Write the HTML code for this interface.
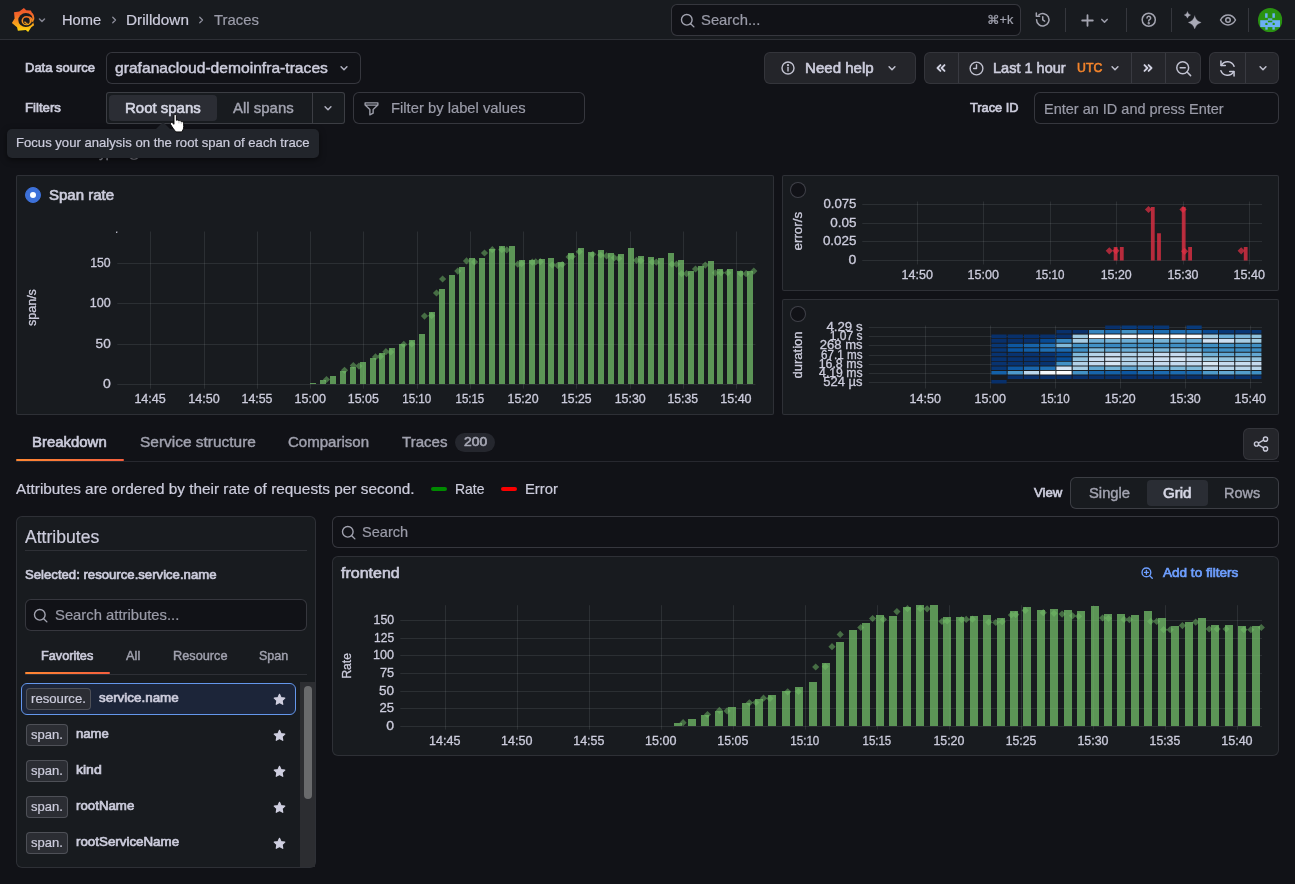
<!DOCTYPE html>
<html lang="en">
<head>
<meta charset="utf-8">
<title>Traces - Drilldown - Grafana</title>
<style>
html,body{margin:0;padding:0}
body{width:1295px;height:884px;overflow:hidden;background:#111217;color:#ccccdc;font-family:"Liberation Sans",sans-serif;position:relative;-webkit-font-smoothing:antialiased}
#app{position:absolute;left:0;top:0;width:1295px;height:884px;overflow:hidden;will-change:transform;transform:translateZ(0)}
.b{position:absolute;box-sizing:content-box;margin:0;padding:0;display:block}
button.b{font:inherit;color:inherit}
.t{position:absolute;white-space:pre;transform-origin:0 50%;margin:0;padding:0;text-decoration:none;color:#ccccdc;font-weight:400}
.i{position:absolute;overflow:visible}
svg text{font-family:"Liberation Sans",sans-serif}
ul,li{list-style:none;margin:0;padding:0}
</style>
</head>
<body>
<div id="app">
<header class="b" style="left:0;top:0;width:1295px;height:39px;background:#181b1f;border-bottom:1px solid rgba(204,204,220,0.12)">
<svg class="i" style="left:0;top:0" width="40" height="40" viewBox="0 0 40 40">
<defs><linearGradient id="lg" gradientUnits="userSpaceOnUse" x1="0" y1="8" x2="0" y2="32"><stop offset="0" stop-color="#f0522a"/><stop offset="0.3" stop-color="#f2682a"/><stop offset="0.65" stop-color="#f9a01c"/><stop offset="1" stop-color="#ffdd0a"/></linearGradient></defs>
<path fill="url(#lg)" d="M23.9 7.9L26.2 10.3L30.9 10.6L31.8 12.6C33 13.6 33.9 15.1 34.2 17C34.5 18.8 34.2 20.4 33 21.8L34.1 25.3L31.3 27.3L28.1 32L25.8 30.1L17.9 30.8L17 27.3L11.9 22.9L14.6 18.5L14 12.3L19.3 11.6Z"/>
<ellipse cx="25.9" cy="20.1" rx="7.6" ry="7" fill="#181b1f"/>
<path fill="url(#lg)" d="M31.6 13.5C33.6 15.3 34.3 17.5 34.1 19.5L32.4 21.5C32.8 19 32.6 16.5 31 14.5Z"/>
<ellipse cx="26.5" cy="20.7" rx="5" ry="4.6" fill="url(#lg)"/>
<path fill="url(#lg)" d="M29 16.2C31.5 16.8 33.2 18.8 33.4 21.3L31.5 22.5C31.8 20 30.5 18 28.5 17.2Z"/>
<circle cx="26.4" cy="20.9" r="3.3" fill="#181b1f"/>
<path d="M24.7 21.5c.3 1.4 1.6 2.1 2.9 1.7" fill="none" stroke="url(#lg)" stroke-width="1.2"/>
</svg>
<svg class="i" style="left:36.2px;top:13.8px;" width="12" height="12" viewBox="0 0 24 24" fill="none" stroke="#82838f" stroke-width="3" stroke-linecap="round" stroke-linejoin="round"><path d="M7 10l5 5 5-5"/></svg>
<nav>
<a class="t" style="left:62.4px;top:9.7px;font-size:14.4px;line-height:20px;transform:scaleX(1.0185);-webkit-text-stroke:0.2px;">Home</a>
<svg class="i" style="left:108px;top:14.2px;" width="12" height="12" viewBox="0 0 24 24" fill="none" stroke="#8e8f9c" stroke-width="2.6" stroke-linecap="round" stroke-linejoin="round"><path d="M9.5 6.5l5.5 5.5-5.5 5.5"/></svg>
<a class="t" style="left:126px;top:9.7px;font-size:14.4px;line-height:20px;transform:scaleX(1.0627);-webkit-text-stroke:0.2px;">Drilldown</a>
<svg class="i" style="left:195px;top:14.2px;" width="12" height="12" viewBox="0 0 24 24" fill="none" stroke="#8e8f9c" stroke-width="2.6" stroke-linecap="round" stroke-linejoin="round"><path d="M9.5 6.5l5.5 5.5-5.5 5.5"/></svg>
<span class="t" style="left:214.2px;top:9.7px;font-size:14.4px;line-height:20px;color:#9b9ca9;transform:scaleX(1.0333);-webkit-text-stroke:0.2px;">Traces</span>
</nav>
<div class="b" style="left:671px;top:4px;width:348px;height:30px;background:#111217;border:1px solid rgba(204,204,220,0.2);border-radius:6px;"></div>
<svg class="i" style="left:678.5px;top:11.5px;" width="17" height="17" viewBox="0 0 24 24" fill="none" stroke="#a2a3b0" stroke-width="1.98" stroke-linecap="round" stroke-linejoin="round"><circle cx="11" cy="11" r="7.5"/><path d="M16.5 16.5L21 21"/></svg>
<span class="t" style="left:700.6px;top:9.7px;font-size:14.4px;line-height:20px;color:#9a9ba8;transform:scaleX(1.0296);-webkit-text-stroke:0.2px;">Search...</span>
<span class="t" style="left:987px;top:9.7px;font-size:12px;line-height:20px;color:#a2a3b0;transform:scaleX(1.0513);-webkit-text-stroke:0.2px;">⌘+k</span>
<svg class="i" style="left:1034.25px;top:11.45px;" width="17.5" height="17.5" viewBox="0 0 24 24" fill="none" stroke="#a3a4b0" stroke-width="2.06" stroke-linecap="round" stroke-linejoin="round"><path d="M3.5 12a8.5 8.5 0 1 0 3-6.5"/><path d="M3.2 2.8v4.4h4.4"/><path d="M12 8v4.3l2.6 1.6"/></svg>
<div class="b" style="left:1064.7px;top:8px;width:1px;height:24px;background:rgba(204,204,220,0.16);"></div>
<svg class="i" style="left:1079.1px;top:11.7px;" width="17" height="17" viewBox="0 0 24 24" fill="none" stroke="#a3a4b0" stroke-width="2.54" stroke-linecap="round" stroke-linejoin="round"><path d="M12 4.5v15M4.5 12h15"/></svg>
<svg class="i" style="left:1098.1px;top:13.5px;" width="13" height="13" viewBox="0 0 24 24" fill="none" stroke="#9a9ba8" stroke-width="2.77" stroke-linecap="round" stroke-linejoin="round"><path d="M7 10l5 5 5-5"/></svg>
<div class="b" style="left:1126px;top:8px;width:1px;height:24px;background:rgba(204,204,220,0.16);"></div>
<svg class="i" style="left:1140.05px;top:11.45px;" width="17.5" height="17.5" viewBox="0 0 24 24" fill="none" stroke="#a3a4b0" stroke-width="2.06" stroke-linecap="round" stroke-linejoin="round"><circle cx="12" cy="12" r="9"/><path d="M9.6 9.6a2.5 2.5 0 1 1 3.6 2.3c-.8.4-1.2.9-1.2 1.8"/><circle cx="12" cy="16.8" r="0.6" fill="#a3a4b0"/></svg>
<div class="b" style="left:1170.8px;top:8px;width:1px;height:24px;background:rgba(204,204,220,0.16);"></div>
<svg class="i" style="left:1182.5px;top:10.9px;" width="19" height="19" viewBox="0 0 24 24" fill="none" stroke="#a9aab6" stroke-width="1.77" stroke-linecap="round" stroke-linejoin="round"><path d="M14.8 6.2Q16.6 12.6 23 14.4Q16.6 16.2 14.8 22.6Q13 16.2 6.6 14.4Q13 12.6 14.8 6.2zM5.6 0.8Q6.52 4.08 9.8 5Q6.52 5.92 5.6 9.2Q4.68 5.92 1.4 5Q4.68 4.08 5.6 0.8z" fill="#a9aab6" stroke="#a9aab6" stroke-width="0.3"/></svg>
<svg class="i" style="left:1219px;top:11.2px;" width="18" height="18" viewBox="0 0 24 24" fill="none" stroke="#a3a4b0" stroke-width="2" stroke-linecap="round" stroke-linejoin="round"><path d="M2 12c2.5-4.4 6-6.5 10-6.5s7.5 2.1 10 6.5c-2.5 4.4-6 6.5-10 6.5s-7.5-2.1-10-6.5z"/><circle cx="12" cy="12" r="3"/></svg>
<div class="b" style="left:1247.6px;top:8px;width:1px;height:24px;background:rgba(204,204,220,0.16);"></div>
<svg class="i" style="left:1257.9px;top:7.8px" width="24.3" height="24.3" viewBox="0 0 24.3 24.3"><defs><clipPath id="av"><circle cx="12.15" cy="12.15" r="12.15"/></clipPath></defs>
<g clip-path="url(#av)"><rect width="24.3" height="24.3" fill="#2a9212"/>
<g fill="#6cb0f5"><rect x="7.1" y="5.3" width="2.5" height="4.5"/><rect x="14.4" y="5.3" width="2.5" height="4.5"/><rect x="9.9" y="10.4" width="4.4" height="1.4"/><rect x="2.2" y="12.2" width="19.8" height="6.9"/><rect x="7.3" y="19.1" width="2.4" height="2.5"/><rect x="14.4" y="19.1" width="2.4" height="2.5"/></g>
<g fill="#2a9212"><rect x="9.9" y="12.8" width="4.4" height="1.5"/><circle cx="8.4" cy="15.9" r="1.2"/><circle cx="15.7" cy="15.9" r="1.2"/></g></g></svg>
</header>
<main>
<label class="t" style="left:25.4px;top:57.6px;font-size:12.4px;line-height:20px;transform:scaleX(1.0492);-webkit-text-stroke:0.65px;">Data source</label>
<div class="b" style="left:106px;top:52px;width:253px;height:30px;background:#111217;border:1px solid rgba(204,204,220,0.2);border-radius:6px;"></div>
<span class="t" style="left:115px;top:57.6px;font-size:14.4px;line-height:20px;transform:scaleX(1.0863);-webkit-text-stroke:0.45px;">grafanacloud-demoinfra-traces</span>
<svg class="i" style="left:336.5px;top:61px;" width="14" height="14" viewBox="0 0 24 24" fill="none" stroke="#b0b1bf" stroke-width="2.57" stroke-linecap="round" stroke-linejoin="round"><path d="M7 10l5 5 5-5"/></svg>
<button class="b" style="left:764px;top:52px;width:150px;height:30px;background:rgba(204,204,220,0.1);border:1px solid rgba(204,204,220,0.1);border-radius:6px;"></button>
<svg class="i" style="left:780px;top:60px;" width="16" height="16" viewBox="0 0 24 24" fill="none" stroke="#c0c1cf" stroke-width="2.1" stroke-linecap="round" stroke-linejoin="round"><circle cx="12" cy="12" r="9"/><path d="M12 11v5.5"/><circle cx="12" cy="7.8" r="0.7" fill="#c0c1cf"/></svg>
<span class="t" style="left:804.6px;top:57.6px;font-size:14.4px;line-height:20px;transform:scaleX(1.0471);-webkit-text-stroke:0.6px;">Need help</span>
<svg class="i" style="left:884.5px;top:61px;" width="14" height="14" viewBox="0 0 24 24" fill="none" stroke="#c0c1cf" stroke-width="2.57" stroke-linecap="round" stroke-linejoin="round"><path d="M7 10l5 5 5-5"/></svg>
<div class="b" style="left:924px;top:52px;width:275px;height:30px;background:rgba(204,204,220,0.1);border:1px solid rgba(204,204,220,0.1);border-radius:6px;"></div>
<div class="b" style="left:958px;top:53px;width:1px;height:30px;background:rgba(204,204,220,0.13);"></div>
<div class="b" style="left:1131px;top:53px;width:1px;height:30px;background:rgba(204,204,220,0.13);"></div>
<div class="b" style="left:1165px;top:53px;width:1px;height:30px;background:rgba(204,204,220,0.13);"></div>
<svg class="i" style="left:934px;top:61px;" width="14" height="14" viewBox="0 0 24 24" fill="none" stroke="#d0d1e0" stroke-width="3.26" stroke-linecap="round" stroke-linejoin="round"><path d="M11 7l-5 5 5 5M18 7l-5 5 5 5"/></svg>
<svg class="i" style="left:967.5px;top:59.5px;" width="17" height="17" viewBox="0 0 24 24" fill="none" stroke="#c0c1cf" stroke-width="1.98" stroke-linecap="round" stroke-linejoin="round"><circle cx="12" cy="12" r="9"/><path d="M12 6.5V12h-4"/></svg>
<span class="t" style="left:993px;top:57.6px;font-size:14.4px;line-height:20px;transform:scaleX(1.0095);-webkit-text-stroke:0.6px;">Last 1 hour</span>
<span class="t" style="left:1077px;top:57.6px;font-size:12.4px;line-height:20px;color:#f5852c;transform:scaleX(0.9934);-webkit-text-stroke:0.6px;">UTC</span>
<svg class="i" style="left:1107.5px;top:61px;" width="14" height="14" viewBox="0 0 24 24" fill="none" stroke="#c0c1cf" stroke-width="2.57" stroke-linecap="round" stroke-linejoin="round"><path d="M7 10l5 5 5-5"/></svg>
<svg class="i" style="left:1141px;top:61px;" width="14" height="14" viewBox="0 0 24 24" fill="none" stroke="#d0d1e0" stroke-width="3.26" stroke-linecap="round" stroke-linejoin="round"><path d="M13 7l5 5-5 5M6 7l5 5-5 5"/></svg>
<svg class="i" style="left:1173.5px;top:59px;" width="19" height="19" viewBox="0 0 24 24" fill="none" stroke="#c0c1cf" stroke-width="1.89" stroke-linecap="round" stroke-linejoin="round"><circle cx="11" cy="11" r="7.5"/><path d="M16.5 16.5L21 21M7.8 11h6.4"/></svg>
<div class="b" style="left:1209px;top:52px;width:68px;height:30px;background:rgba(204,204,220,0.1);border:1px solid rgba(204,204,220,0.1);border-radius:6px;"></div>
<div class="b" style="left:1245px;top:53px;width:1px;height:30px;background:rgba(204,204,220,0.13);"></div>
<svg class="i" style="left:1216.5px;top:57.5px;" width="21" height="21" viewBox="0 0 24 24" fill="none" stroke="#c8c9d8" stroke-width="1.71" stroke-linecap="round" stroke-linejoin="round"><path d="M19.5 9.5A8 8 0 0 0 5 8.5"/><path d="M4.5 3.5v5h5"/><path d="M4.5 14.5A8 8 0 0 0 19 15.5"/><path d="M19.5 20.5v-5h-5"/></svg>
<svg class="i" style="left:1255.5px;top:61px;" width="14" height="14" viewBox="0 0 24 24" fill="none" stroke="#c0c1cf" stroke-width="2.57" stroke-linecap="round" stroke-linejoin="round"><path d="M7 10l5 5 5-5"/></svg>
<label class="t" style="left:25.4px;top:97.5px;font-size:12.4px;line-height:20px;transform:scaleX(1.0642);-webkit-text-stroke:0.65px;">Filters</label>
<div class="b" style="left:106px;top:92px;width:237px;height:30px;background:#181b1f;border:1px solid rgba(204,204,220,0.2);border-radius:3px;"></div>
<div class="b" style="left:312px;top:93px;width:1px;height:30px;background:rgba(204,204,220,0.2);"></div>
<div class="b" style="left:109px;top:95px;width:107.5px;height:25.5px;background:#2b2d34;border-radius:4px;"></div>
<span class="t" style="left:125px;top:97.6px;font-size:14.4px;line-height:20px;color:#d5d6e4;transform:scaleX(1.0399);-webkit-text-stroke:0.6px;">Root spans</span>
<span class="t" style="left:233.2px;top:97.6px;font-size:14.4px;line-height:20px;color:#a3a4b1;transform:scaleX(1.0393);-webkit-text-stroke:0.4px;">All spans</span>
<svg class="i" style="left:320.6px;top:101px;" width="14" height="14" viewBox="0 0 24 24" fill="none" stroke="#b0b1bf" stroke-width="2.57" stroke-linecap="round" stroke-linejoin="round"><path d="M7 10l5 5 5-5"/></svg>
<div class="b" style="left:353px;top:92px;width:230px;height:30px;background:#111217;border:1px solid rgba(204,204,220,0.2);border-radius:6px;"></div>
<svg class="i" style="left:362.5px;top:99.5px;" width="17" height="17" viewBox="0 0 24 24" fill="none" stroke="#9c9da9" stroke-width="1.98" stroke-linecap="round" stroke-linejoin="round"><path d="M3 4h18v3.2l-6.7 6.3v5.2l-4.6 2.3v-7.5L3 7.2zM3.5 7.2h17"/></svg>
<span class="t" style="left:390.6px;top:97.6px;font-size:14.4px;line-height:20px;color:#9a9ba8;transform:scaleX(1.0268);-webkit-text-stroke:0.2px;">Filter by label values</span>
<label class="t" style="left:970.4px;top:97.5px;font-size:12.4px;line-height:20px;transform:scaleX(1.0309);-webkit-text-stroke:0.65px;">Trace ID</label>
<div class="b" style="left:1034px;top:92px;width:243px;height:30px;background:#111217;border:1px solid rgba(204,204,220,0.2);border-radius:6px;"></div>
<span class="t" style="left:1043.6px;top:98.6px;font-size:14.4px;line-height:20px;color:#9a9ba8;transform:scaleX(1.0073);-webkit-text-stroke:0.2px;">Enter an ID and press Enter</span>
<section>
<div class="b" style="left:16px;top:175px;width:756px;height:238px;background:#181b1f;border:1px solid rgba(204,204,220,0.12);border-radius:2px;"></div>
<div class="b" style="left:25px;top:187px;width:14px;height:14px;border-radius:50%;background:#3d71d9;border:1px solid #3d71d9"><i class="b" style="left:4px;top:4px;width:6px;height:6px;border-radius:50%;background:#fff"></i></div>
<h2 class="t" style="left:49.4px;top:185px;font-size:14.4px;line-height:20px;transform:scaleX(1.0432);-webkit-text-stroke:0.65px;">Span rate</h2>
<svg class="i" style="left:17px;top:176px" width="756" height="238" viewBox="17 176 756 238" role="img">
<path d="M117.3 384.5H755.4M117.3 344.5H755.4M117.3 303.5H755.4M117.3 263.5H755.4M150.5 231.5V388.7M204.5 231.5V388.7M257.5 231.5V388.7M310.5 231.5V388.7M363.5 231.5V388.7M417.5 231.5V388.7M470.5 231.5V388.7M523.5 231.5V388.7M576.5 231.5V388.7M630.5 231.5V388.7M683.5 231.5V388.7M736.5 231.5V388.7" stroke="rgba(240,250,255,0.09)" stroke-width="1" fill="none"/>
<path d="M310 384v-1h6v1zM320 384v-4h6v4zM330 384v-8h6v8zM340 384v-13h6v13zM350 384v-17h6v17zM360 384v-22h6v22zM370 384v-26h6v26zM379 384v-31h6v31zM389 384v-36h6v36zM399 384v-40h6v40zM409 384v-44h6v44zM419 384v-50h6v50zM429 384v-72h6v72zM439 384v-95h6v95zM449 384v-109h6v109zM459 384v-117h6v117zM469 384v-126h6v126zM479 384v-126h6v126zM489 384v-135h6v135zM499 384v-138h6v138zM509 384v-138h6v138zM519 384v-124h6v124zM529 384v-124h6v124zM539 384v-125h6v125zM548 384v-126h6v126zM558 384v-122h6v122zM568 384v-131h6v131zM578 384v-136h6v136zM588 384v-132h6v132zM598 384v-134h6v134zM608 384v-131h6v131zM618 384v-130h6v130zM628 384v-136h6v136zM638 384v-128h6v128zM648 384v-127h6v127zM658 384v-126h6v126zM668 384v-131h6v131zM678 384v-124h6v124zM688 384v-113h6v113zM698 384v-118h6v118zM708 384v-123h6v123zM717 384v-115h6v115zM727 384v-115h6v115zM737 384v-113h6v113zM747 384v-113h6v113z" fill="#73bf69" fill-opacity="0.75"/>
<path d="M326.5 375.9l3.6 3.6l-3.6 3.6l-3.6 -3.6zM344.5 366.7l3.6 3.6l-3.6 3.6l-3.6 -3.6zM353.3 361.9l3.6 3.6l-3.6 3.6l-3.6 -3.6zM359 362.5l3.6 3.6l-3.6 3.6l-3.6 -3.6zM375.5 353.3l3.6 3.6l-3.6 3.6l-3.6 -3.6zM380.3 352.9l3.6 3.6l-3.6 3.6l-3.6 -3.6zM385.9 348.1l3.6 3.6l-3.6 3.6l-3.6 -3.6zM390.7 348.4l3.6 3.6l-3.6 3.6l-3.6 -3.6zM403.8 340.8l3.6 3.6l-3.6 3.6l-3.6 -3.6zM411.8 340.4l3.6 3.6l-3.6 3.6l-3.6 -3.6zM424.5 312.5l3.6 3.6l-3.6 3.6l-3.6 -3.6zM431.6 312.1l3.6 3.6l-3.6 3.6l-3.6 -3.6zM436.5 289.4l3.6 3.6l-3.6 3.6l-3.6 -3.6zM442.6 275.4l3.6 3.6l-3.6 3.6l-3.6 -3.6zM457.8 267.5l3.6 3.6l-3.6 3.6l-3.6 -3.6zM466.5 257.3l3.6 3.6l-3.6 3.6l-3.6 -3.6zM474.5 258.3l3.6 3.6l-3.6 3.6l-3.6 -3.6zM484.5 249.4l3.6 3.6l-3.6 3.6l-3.6 -3.6zM492.3 246.1l3.6 3.6l-3.6 3.6l-3.6 -3.6zM501.8 246.1l3.6 3.6l-3.6 3.6l-3.6 -3.6zM506.8 246.3l3.6 3.6l-3.6 3.6l-3.6 -3.6zM517.8 260.6l3.6 3.6l-3.6 3.6l-3.6 -3.6zM521.6 260.1l3.6 3.6l-3.6 3.6l-3.6 -3.6zM532.3 258.6l3.6 3.6l-3.6 3.6l-3.6 -3.6zM535.7 258.3l3.6 3.6l-3.6 3.6l-3.6 -3.6zM540.3 258.1l3.6 3.6l-3.6 3.6l-3.6 -3.6zM552.3 261.5l3.6 3.6l-3.6 3.6l-3.6 -3.6zM557.6 261.9l3.6 3.6l-3.6 3.6l-3.6 -3.6zM562.3 260.9l3.6 3.6l-3.6 3.6l-3.6 -3.6zM569.1 253.3l3.6 3.6l-3.6 3.6l-3.6 -3.6zM572.3 252.9l3.6 3.6l-3.6 3.6l-3.6 -3.6zM579.3 248.1l3.6 3.6l-3.6 3.6l-3.6 -3.6zM592.7 250.7l3.6 3.6l-3.6 3.6l-3.6 -3.6zM600.6 251.4l3.6 3.6l-3.6 3.6l-3.6 -3.6zM606.6 252.3l3.6 3.6l-3.6 3.6l-3.6 -3.6zM614.3 254.2l3.6 3.6l-3.6 3.6l-3.6 -3.6zM618.8 254.8l3.6 3.6l-3.6 3.6l-3.6 -3.6zM636.5 256.7l3.6 3.6l-3.6 3.6l-3.6 -3.6zM640.9 257.1l3.6 3.6l-3.6 3.6l-3.6 -3.6zM652.3 258.3l3.6 3.6l-3.6 3.6l-3.6 -3.6zM656.3 258.6l3.6 3.6l-3.6 3.6l-3.6 -3.6zM672 260.6l3.6 3.6l-3.6 3.6l-3.6 -3.6zM676.5 260.6l3.6 3.6l-3.6 3.6l-3.6 -3.6zM681.6 270.1l3.6 3.6l-3.6 3.6l-3.6 -3.6zM686.5 270.1l3.6 3.6l-3.6 3.6l-3.6 -3.6zM695.5 265.4l3.6 3.6l-3.6 3.6l-3.6 -3.6zM705.3 261.5l3.6 3.6l-3.6 3.6l-3.6 -3.6zM715.3 269.2l3.6 3.6l-3.6 3.6l-3.6 -3.6zM721.1 269.2l3.6 3.6l-3.6 3.6l-3.6 -3.6zM727.8 269.2l3.6 3.6l-3.6 3.6l-3.6 -3.6zM740.9 270.1l3.6 3.6l-3.6 3.6l-3.6 -3.6zM746.1 270.1l3.6 3.6l-3.6 3.6l-3.6 -3.6zM753.8 267.5l3.6 3.6l-3.6 3.6l-3.6 -3.6z" fill="#73bf69" fill-opacity="0.5"/>
<text x="102.9" y="388.2" font-size="12.3" fill="#ccccdc" stroke="#ccccdc" stroke-width="0.3" textLength="7.8" lengthAdjust="spacingAndGlyphs">0</text>
<text x="95.6" y="348.2" font-size="12.3" fill="#ccccdc" stroke="#ccccdc" stroke-width="0.3" textLength="15.1" lengthAdjust="spacingAndGlyphs">50</text>
<text x="89.7" y="307.2" font-size="12.3" fill="#ccccdc" stroke="#ccccdc" stroke-width="0.3" textLength="21" lengthAdjust="spacingAndGlyphs">100</text>
<text x="90.2" y="267.2" font-size="12.3" fill="#ccccdc" stroke="#ccccdc" stroke-width="0.3" textLength="20.5" lengthAdjust="spacingAndGlyphs">150</text>
<text x="134.4" y="402.9" font-size="12.3" fill="#ccccdc" stroke="#ccccdc" stroke-width="0.3" textLength="31.4" lengthAdjust="spacingAndGlyphs">14:45</text>
<text x="188.3" y="402.9" font-size="12.3" fill="#ccccdc" stroke="#ccccdc" stroke-width="0.3" textLength="31.4" lengthAdjust="spacingAndGlyphs">14:50</text>
<text x="241.5" y="402.9" font-size="12.3" fill="#ccccdc" stroke="#ccccdc" stroke-width="0.3" textLength="31" lengthAdjust="spacingAndGlyphs">14:55</text>
<text x="294.5" y="402.9" font-size="12.3" fill="#ccccdc" stroke="#ccccdc" stroke-width="0.3" textLength="31.4" lengthAdjust="spacingAndGlyphs">15:00</text>
<text x="347.8" y="402.9" font-size="12.3" fill="#ccccdc" stroke="#ccccdc" stroke-width="0.3" textLength="31" lengthAdjust="spacingAndGlyphs">15:05</text>
<text x="402.2" y="402.9" font-size="12.3" fill="#ccccdc" stroke="#ccccdc" stroke-width="0.3" textLength="29" lengthAdjust="spacingAndGlyphs">15:10</text>
<text x="455.6" y="402.9" font-size="12.3" fill="#ccccdc" stroke="#ccccdc" stroke-width="0.3" textLength="28.6" lengthAdjust="spacingAndGlyphs">15:15</text>
<text x="507.6" y="402.9" font-size="12.3" fill="#ccccdc" stroke="#ccccdc" stroke-width="0.3" textLength="31" lengthAdjust="spacingAndGlyphs">15:20</text>
<text x="561.1" y="402.9" font-size="12.3" fill="#ccccdc" stroke="#ccccdc" stroke-width="0.3" textLength="30.5" lengthAdjust="spacingAndGlyphs">15:25</text>
<text x="614.7" y="402.9" font-size="12.3" fill="#ccccdc" stroke="#ccccdc" stroke-width="0.3" textLength="31.1" lengthAdjust="spacingAndGlyphs">15:30</text>
<text x="667.4" y="402.9" font-size="12.3" fill="#ccccdc" stroke="#ccccdc" stroke-width="0.3" textLength="30.6" lengthAdjust="spacingAndGlyphs">15:35</text>
<text x="720.2" y="402.9" font-size="12.3" fill="#ccccdc" stroke="#ccccdc" stroke-width="0.3" textLength="31.4" lengthAdjust="spacingAndGlyphs">15:40</text>
</svg>
<svg class="i" style="left:17px;top:220px" width="40" height="180" viewBox="17 220 40 180"><text x="18" y="307.6" font-size="12.3" fill="#ccccdc" stroke="#ccccdc" stroke-width="0.3" textLength="37" lengthAdjust="spacingAndGlyphs" transform="rotate(-90 36.5 307.6)">span/s</text><rect x="116.2" y="231.5" width="1.2" height="1.2" fill="#ccccdc"/></svg>
<div class="b" style="left:116.3px;top:231.5px;width:1.2px;height:1.2px;background:#b8b9c6;"></div>
</section>
<section>
<div class="b" style="left:782px;top:175px;width:495px;height:114px;background:#181b1f;border:1px solid rgba(204,204,220,0.12);border-radius:2px;"></div>
<div class="b" style="left:790px;top:182px;width:14px;height:14px;background:#111217;border:1px solid rgba(204,204,220,0.25);border-radius:8px;"></div>
<svg class="i" style="left:783px;top:176px" width="496" height="115" viewBox="783 176 496 115" role="img">
<path d="M862.3 204.5H1262M862.3 223.5H1262M862.3 241.5H1262M862.3 260.5H1262M917.5 201.5V264.5M983.5 201.5V264.5M1050.5 201.5V264.5M1116.5 201.5V264.5M1183.5 201.5V264.5M1249.5 201.5V264.5" stroke="rgba(240,250,255,0.09)" stroke-width="1" fill="none"/>
<path d="M1113.7 260.5V246.9h3.8V260.5zM1119.9 260.5V246.9h3.8V260.5zM1150.9 260.5V206.9h3.8V260.5zM1157.1 260.5V233.3h3.8V260.5zM1181.8 260.5V206.9h3.8V260.5zM1188.2 260.5V246.9h3.8V260.5zM1243.8 260.5V246.9h3.8V260.5z" fill="#e02f44" fill-opacity="0.8"/>
<path d="M1109.3 247.2l3.6 3.6l-3.6 3.6l-3.6 -3.6zM1115.9 247.2l3.6 3.6l-3.6 3.6l-3.6 -3.6zM1148.5 205.9l3.6 3.6l-3.6 3.6l-3.6 -3.6zM1183 205.9l3.6 3.6l-3.6 3.6l-3.6 -3.6zM1184.6 247.7l3.6 3.6l-3.6 3.6l-3.6 -3.6zM1241.2 247.2l3.6 3.6l-3.6 3.6l-3.6 -3.6z" fill="#e02f44" fill-opacity="0.72"/>
<text x="823.4" y="208.2" font-size="12.3" fill="#ccccdc" stroke="#ccccdc" stroke-width="0.3" textLength="33" lengthAdjust="spacingAndGlyphs">0.075</text>
<text x="830.2" y="227.2" font-size="12.3" fill="#ccccdc" stroke="#ccccdc" stroke-width="0.3" textLength="26.2" lengthAdjust="spacingAndGlyphs">0.05</text>
<text x="822.9" y="245.2" font-size="12.3" fill="#ccccdc" stroke="#ccccdc" stroke-width="0.3" textLength="33.5" lengthAdjust="spacingAndGlyphs">0.025</text>
<text x="848.6" y="264.2" font-size="12.3" fill="#ccccdc" stroke="#ccccdc" stroke-width="0.3" textLength="7.8" lengthAdjust="spacingAndGlyphs">0</text>
<text x="901.5" y="279.1" font-size="12.3" fill="#ccccdc" stroke="#ccccdc" stroke-width="0.3" textLength="31.4" lengthAdjust="spacingAndGlyphs">14:50</text>
<text x="967.6" y="279.1" font-size="12.3" fill="#ccccdc" stroke="#ccccdc" stroke-width="0.3" textLength="31.4" lengthAdjust="spacingAndGlyphs">15:00</text>
<text x="1035.4" y="279.1" font-size="12.3" fill="#ccccdc" stroke="#ccccdc" stroke-width="0.3" textLength="29" lengthAdjust="spacingAndGlyphs">15:10</text>
<text x="1100.7" y="279.1" font-size="12.3" fill="#ccccdc" stroke="#ccccdc" stroke-width="0.3" textLength="31" lengthAdjust="spacingAndGlyphs">15:20</text>
<text x="1167.4" y="279.1" font-size="12.3" fill="#ccccdc" stroke="#ccccdc" stroke-width="0.3" textLength="31.1" lengthAdjust="spacingAndGlyphs">15:30</text>
<text x="1233.5" y="279.1" font-size="12.3" fill="#ccccdc" stroke="#ccccdc" stroke-width="0.3" textLength="31.4" lengthAdjust="spacingAndGlyphs">15:40</text>
<text x="782.4" y="231.2" font-size="12.3" fill="#ccccdc" stroke="#ccccdc" stroke-width="0.3" textLength="38.5" lengthAdjust="spacingAndGlyphs" transform="rotate(-90 801.6 231.2)">error/s</text>
</svg>
</section>
<section>
<div class="b" style="left:782px;top:299px;width:495px;height:114px;background:#181b1f;border:1px solid rgba(204,204,220,0.12);border-radius:2px;"></div>
<div class="b" style="left:790px;top:306px;width:14px;height:14px;background:#111217;border:1px solid rgba(204,204,220,0.25);border-radius:8px;"></div>
<svg class="i" style="left:783px;top:300px" width="496" height="115" viewBox="783 300 496 115" role="img">
<path d="M868.8 327.5H1262M868.8 336.5H1262M868.8 345.5H1262M868.8 355.5H1262M868.8 364.5H1262M868.8 373.5H1262M868.8 382.5H1262M925.5 325.5V388.5M990.5 325.5V388.5M1055.5 325.5V388.5M1120.5 325.5V388.5M1185.5 325.5V388.5M1250.5 325.5V388.5" stroke="rgba(240,250,255,0.09)" stroke-width="1" fill="none"/>
<path d="M1105.2 325.5h15.2v3.6h-15.2zM1056.4 330h15.2v3.6h-15.2zM1072.7 330h15.2v3.6h-15.2zM991.4 334.6h15.2v3.6h-15.2zM1007.7 334.6h15.2v3.6h-15.2zM1023.9 334.6h15.2v3.6h-15.2zM1040.2 334.6h15.2v3.6h-15.2zM1056.4 334.6h15.2v3.6h-15.2zM991.4 339.1h15.2v3.6h-15.2zM1007.7 339.1h15.2v3.6h-15.2zM1023.9 339.1h15.2v3.6h-15.2zM1007.7 375.4h15.2v3.6h-15.2zM1023.9 375.4h15.2v3.6h-15.2zM1040.2 375.4h15.2v3.6h-15.2zM1056.4 375.4h15.2v3.6h-15.2zM1072.7 375.4h15.2v3.6h-15.2zM1089 375.4h15.2v3.6h-15.2zM1105.2 375.4h15.2v3.6h-15.2zM1121.5 375.4h15.2v3.6h-15.2zM1137.7 375.4h15.2v3.6h-15.2zM1154 375.4h15.2v3.6h-15.2zM1170.3 375.4h15.2v3.6h-15.2zM1186.5 375.4h15.2v3.6h-15.2zM1202.8 375.4h15.2v3.6h-15.2zM1219 375.4h15.2v3.6h-15.2zM1235.3 375.4h15.2v3.6h-15.2zM1251.6 375.4h9.8v3.6h-9.8zM991.4 380h15.2v3.6h-15.2z" fill="#08306b"/>
<path d="M991.4 352.7h15.2v3.6h-15.2zM1007.7 352.7h15.2v3.6h-15.2zM1023.9 352.7h15.2v3.6h-15.2zM1040.2 352.7h15.2v3.6h-15.2zM991.4 357.3h15.2v3.6h-15.2zM1007.7 357.3h15.2v3.6h-15.2zM1023.9 357.3h15.2v3.6h-15.2zM1040.2 357.3h15.2v3.6h-15.2zM991.4 361.8h15.2v3.6h-15.2zM1007.7 361.8h15.2v3.6h-15.2zM1023.9 361.8h15.2v3.6h-15.2zM1040.2 361.8h15.2v3.6h-15.2z" fill="#083370"/>
<path d="M1137.7 325.5h15.2v3.6h-15.2zM1154 325.5h15.2v3.6h-15.2zM1219 330h15.2v3.6h-15.2zM1235.3 330h15.2v3.6h-15.2zM1251.6 330h9.8v3.6h-9.8zM991.4 343.7h15.2v3.6h-15.2zM991.4 348.2h15.2v3.6h-15.2zM991.4 366.4h15.2v3.6h-15.2z" fill="#083775"/>
<path d="M1121.5 325.5h15.2v3.6h-15.2zM1186.5 325.5h15.2v3.6h-15.2z" fill="#083a7a"/>
<path d="M1056.4 352.7h15.2v3.6h-15.2z" fill="#08478d"/>
<path d="M1202.8 330h15.2v3.6h-15.2zM1040.2 339.1h15.2v3.6h-15.2z" fill="#084a92"/>
<path d="M1056.4 357.3h15.2v3.6h-15.2z" fill="#084e97"/>
<path d="M1007.7 348.2h15.2v3.6h-15.2z" fill="#0b549e"/>
<path d="M1007.7 343.7h15.2v3.6h-15.2zM1007.7 366.4h15.2v3.6h-15.2zM1121.5 370.9h15.2v3.6h-15.2z" fill="#0d57a1"/>
<path d="M1023.9 348.2h15.2v3.6h-15.2z" fill="#125ea6"/>
<path d="M991.4 370.9h15.2v3.6h-15.2zM1105.2 370.9h15.2v3.6h-15.2z" fill="#1461a8"/>
<path d="M1023.9 343.7h15.2v3.6h-15.2zM1089 370.9h15.2v3.6h-15.2z" fill="#1764ab"/>
<path d="M1023.9 366.4h15.2v3.6h-15.2z" fill="#1a67ae"/>
<path d="M1056.4 348.2h15.2v3.6h-15.2zM1137.7 370.9h15.2v3.6h-15.2zM1154 370.9h15.2v3.6h-15.2zM1170.3 370.9h15.2v3.6h-15.2zM1186.5 370.9h15.2v3.6h-15.2z" fill="#1c6bb0"/>
<path d="M1137.7 330h15.2v3.6h-15.2zM1154 330h15.2v3.6h-15.2zM1170.3 330h15.2v3.6h-15.2zM1040.2 348.2h15.2v3.6h-15.2z" fill="#1e6eb2"/>
<path d="M1105.2 330h15.2v3.6h-15.2zM1186.5 330h15.2v3.6h-15.2zM1040.2 343.7h15.2v3.6h-15.2zM1040.2 366.4h15.2v3.6h-15.2z" fill="#2171b5"/>
<path d="M1089 330h15.2v3.6h-15.2z" fill="#3585bf"/>
<path d="M1056.4 339.1h15.2v3.6h-15.2zM1105.2 343.7h15.2v3.6h-15.2z" fill="#3888c1"/>
<path d="M1137.7 343.7h15.2v3.6h-15.2zM1154 343.7h15.2v3.6h-15.2zM1170.3 343.7h15.2v3.6h-15.2zM1186.5 343.7h15.2v3.6h-15.2zM1202.8 343.7h15.2v3.6h-15.2zM1219 343.7h15.2v3.6h-15.2zM1235.3 343.7h15.2v3.6h-15.2zM1251.6 343.7h9.8v3.6h-9.8zM1072.7 348.2h15.2v3.6h-15.2zM1202.8 348.2h15.2v3.6h-15.2zM1219 348.2h15.2v3.6h-15.2zM1235.3 348.2h15.2v3.6h-15.2zM1251.6 348.2h9.8v3.6h-9.8zM1251.6 370.9h9.8v3.6h-9.8z" fill="#3f8fc4"/>
<path d="M1121.5 330h15.2v3.6h-15.2zM1072.7 343.7h15.2v3.6h-15.2zM1089 343.7h15.2v3.6h-15.2zM1121.5 343.7h15.2v3.6h-15.2zM1056.4 361.8h15.2v3.6h-15.2zM1072.7 370.9h15.2v3.6h-15.2z" fill="#4292c6"/>
<path d="M1007.7 370.9h15.2v3.6h-15.2zM1202.8 370.9h15.2v3.6h-15.2z" fill="#4e9acb"/>
<path d="M1235.3 370.9h15.2v3.6h-15.2z" fill="#529dcc"/>
<path d="M1089 366.4h15.2v3.6h-15.2z" fill="#5fa6d1"/>
<path d="M1219 352.7h15.2v3.6h-15.2zM1235.3 352.7h15.2v3.6h-15.2zM1251.6 352.7h9.8v3.6h-9.8zM1121.5 366.4h15.2v3.6h-15.2zM1219 370.9h15.2v3.6h-15.2z" fill="#63a8d3"/>
<path d="M1137.7 339.1h15.2v3.6h-15.2zM1170.3 339.1h15.2v3.6h-15.2zM1186.5 339.1h15.2v3.6h-15.2zM1105.2 348.2h15.2v3.6h-15.2z" fill="#67abd4"/>
<path d="M1219 334.6h15.2v3.6h-15.2zM1089 339.1h15.2v3.6h-15.2zM1121.5 339.1h15.2v3.6h-15.2zM1121.5 348.2h15.2v3.6h-15.2zM1186.5 348.2h15.2v3.6h-15.2z" fill="#6baed6"/>
<path d="M1202.8 352.7h15.2v3.6h-15.2z" fill="#70b1d7"/>
<path d="M1105.2 339.1h15.2v3.6h-15.2zM1154 339.1h15.2v3.6h-15.2zM1105.2 366.4h15.2v3.6h-15.2z" fill="#75b4d8"/>
<path d="M1235.3 334.6h15.2v3.6h-15.2zM1137.7 348.2h15.2v3.6h-15.2zM1154 348.2h15.2v3.6h-15.2zM1170.3 348.2h15.2v3.6h-15.2z" fill="#7ab6d9"/>
<path d="M1056.4 343.7h15.2v3.6h-15.2zM1089 348.2h15.2v3.6h-15.2zM1072.7 352.7h15.2v3.6h-15.2zM1137.7 366.4h15.2v3.6h-15.2zM1154 366.4h15.2v3.6h-15.2zM1170.3 366.4h15.2v3.6h-15.2zM1186.5 366.4h15.2v3.6h-15.2z" fill="#7fb9da"/>
<path d="M1251.6 334.6h9.8v3.6h-9.8z" fill="#8fc2de"/>
<path d="M1072.7 357.3h15.2v3.6h-15.2zM1219 357.3h15.2v3.6h-15.2zM1235.3 357.3h15.2v3.6h-15.2zM1251.6 357.3h9.8v3.6h-9.8z" fill="#94c4df"/>
<path d="M1072.7 334.6h15.2v3.6h-15.2z" fill="#9ecae1"/>
<path d="M1202.8 334.6h15.2v3.6h-15.2zM1251.6 339.1h9.8v3.6h-9.8zM1202.8 357.3h15.2v3.6h-15.2z" fill="#a2cce2"/>
<path d="M1072.7 339.1h15.2v3.6h-15.2zM1235.3 339.1h15.2v3.6h-15.2zM1072.7 366.4h15.2v3.6h-15.2z" fill="#a6cde4"/>
<path d="M1121.5 352.7h15.2v3.6h-15.2zM1121.5 357.3h15.2v3.6h-15.2zM1072.7 361.8h15.2v3.6h-15.2zM1121.5 361.8h15.2v3.6h-15.2z" fill="#b2d2e8"/>
<path d="M1089 352.7h15.2v3.6h-15.2zM1137.7 352.7h15.2v3.6h-15.2zM1186.5 352.7h15.2v3.6h-15.2z" fill="#b6d4e9"/>
<path d="M1137.7 361.8h15.2v3.6h-15.2zM1219 366.4h15.2v3.6h-15.2zM1235.3 366.4h15.2v3.6h-15.2zM1251.6 366.4h9.8v3.6h-9.8zM1023.9 370.9h15.2v3.6h-15.2z" fill="#bad6eb"/>
<path d="M1202.8 366.4h15.2v3.6h-15.2z" fill="#bed8ec"/>
<path d="M1089 361.8h15.2v3.6h-15.2z" fill="#c2d9ee"/>
<path d="M1105.2 352.7h15.2v3.6h-15.2zM1154 352.7h15.2v3.6h-15.2zM1170.3 352.7h15.2v3.6h-15.2zM1089 357.3h15.2v3.6h-15.2zM1186.5 357.3h15.2v3.6h-15.2zM1154 361.8h15.2v3.6h-15.2zM1170.3 361.8h15.2v3.6h-15.2zM1186.5 361.8h15.2v3.6h-15.2zM1219 361.8h15.2v3.6h-15.2zM1251.6 361.8h9.8v3.6h-9.8z" fill="#c6dbef"/>
<path d="M1137.7 357.3h15.2v3.6h-15.2zM1235.3 361.8h15.2v3.6h-15.2z" fill="#c8ddf0"/>
<path d="M1219 339.1h15.2v3.6h-15.2zM1154 357.3h15.2v3.6h-15.2z" fill="#cbdef1"/>
<path d="M1202.8 339.1h15.2v3.6h-15.2z" fill="#d0e1f2"/>
<path d="M1105.2 357.3h15.2v3.6h-15.2z" fill="#d2e3f3"/>
<path d="M1170.3 357.3h15.2v3.6h-15.2zM1056.4 366.4h15.2v3.6h-15.2z" fill="#d4e5f4"/>
<path d="M1105.2 361.8h15.2v3.6h-15.2z" fill="#d7e6f5"/>
<path d="M1202.8 361.8h15.2v3.6h-15.2z" fill="#d9e8f5"/>
<path d="M1040.2 370.9h15.2v3.6h-15.2z" fill="#f2f7fc"/>
<path d="M1121.5 334.6h15.2v3.6h-15.2z" fill="#f5f9fd"/>
<path d="M1186.5 334.6h15.2v3.6h-15.2z" fill="#f8fbfd"/>
<path d="M1056.4 370.9h15.2v3.6h-15.2z" fill="#fcfdfe"/>
<path d="M1089 334.6h15.2v3.6h-15.2zM1105.2 334.6h15.2v3.6h-15.2zM1137.7 334.6h15.2v3.6h-15.2zM1154 334.6h15.2v3.6h-15.2zM1170.3 334.6h15.2v3.6h-15.2z" fill="#ffffff"/>
<text x="826.4" y="331.3" font-size="12.3" fill="#ccccdc" stroke="#ccccdc" stroke-width="0.3" textLength="36.2" lengthAdjust="spacingAndGlyphs">4.29 s</text>
<text x="829.8" y="340.3" font-size="12.3" fill="#ccccdc" stroke="#ccccdc" stroke-width="0.3" textLength="32.8" lengthAdjust="spacingAndGlyphs">1.07 s</text>
<text x="819.7" y="349.3" font-size="12.3" fill="#ccccdc" stroke="#ccccdc" stroke-width="0.3" textLength="42.9" lengthAdjust="spacingAndGlyphs">268 ms</text>
<text x="821.1" y="359.3" font-size="12.3" fill="#ccccdc" stroke="#ccccdc" stroke-width="0.3" textLength="41.5" lengthAdjust="spacingAndGlyphs">67.1 ms</text>
<text x="818.7" y="368.3" font-size="12.3" fill="#ccccdc" stroke="#ccccdc" stroke-width="0.3" textLength="43.9" lengthAdjust="spacingAndGlyphs">16.8 ms</text>
<text x="819.1" y="377.3" font-size="12.3" fill="#ccccdc" stroke="#ccccdc" stroke-width="0.3" textLength="43.5" lengthAdjust="spacingAndGlyphs">4.19 ms</text>
<text x="823.3" y="386.3" font-size="12.3" fill="#ccccdc" stroke="#ccccdc" stroke-width="0.3" textLength="39.3" lengthAdjust="spacingAndGlyphs">524 µs</text>
<text x="909.5" y="403.3" font-size="12.3" fill="#ccccdc" stroke="#ccccdc" stroke-width="0.3" textLength="31.4" lengthAdjust="spacingAndGlyphs">14:50</text>
<text x="974.5" y="403.3" font-size="12.3" fill="#ccccdc" stroke="#ccccdc" stroke-width="0.3" textLength="31.4" lengthAdjust="spacingAndGlyphs">15:00</text>
<text x="1040.7" y="403.3" font-size="12.3" fill="#ccccdc" stroke="#ccccdc" stroke-width="0.3" textLength="29" lengthAdjust="spacingAndGlyphs">15:10</text>
<text x="1104.7" y="403.3" font-size="12.3" fill="#ccccdc" stroke="#ccccdc" stroke-width="0.3" textLength="31" lengthAdjust="spacingAndGlyphs">15:20</text>
<text x="1169.7" y="403.3" font-size="12.3" fill="#ccccdc" stroke="#ccccdc" stroke-width="0.3" textLength="31.1" lengthAdjust="spacingAndGlyphs">15:30</text>
<text x="1234.6" y="403.3" font-size="12.3" fill="#ccccdc" stroke="#ccccdc" stroke-width="0.3" textLength="31.4" lengthAdjust="spacingAndGlyphs">15:40</text>
<text x="778.1" y="355" font-size="12.3" fill="#ccccdc" stroke="#ccccdc" stroke-width="0.3" textLength="47" lengthAdjust="spacingAndGlyphs" transform="rotate(-90 801.6 355)">duration</text>
</svg>
</section>
<span class="t" style="left:16.4px;top:143.2px;font-size:12.4px;line-height:20px;color:#8f909c;transform:scaleX(1.0591);-webkit-text-stroke:0.4px;">Select metric type</span>
<svg class="i" style="left:127px;top:146.6px;" width="14" height="14" viewBox="0 0 24 24" fill="none" stroke="#7e7f8a" stroke-width="2.06" stroke-linecap="round" stroke-linejoin="round"><circle cx="12" cy="12" r="9"/><path d="M12 11v5.5"/><circle cx="12" cy="7.8" r="0.7" fill="#7e7f8a"/></svg>
<div role="tooltip">
<div class="b" style="left:7px;top:129px;width:312px;height:28.5px;background:#22252b;border-radius:5px;box-shadow:0 2px 6px rgba(0,0,0,0.5);"></div>
<svg class="i" style="left:156px;top:122.4px" width="14" height="7" viewBox="0 0 14 7"><path d="M0 7L7 0L14 7z" fill="#22252b"/></svg>
<span class="t" style="left:16.4px;top:132.8px;font-size:12.4px;line-height:20px;transform:scaleX(1.0574);-webkit-text-stroke:0.2px;">Focus your analysis on the root span of each trace</span>
</div>
<svg class="i" style="left:168px;top:112px" width="18" height="22" viewBox="0 0 18 22"><path d="M6 3.6C6 2.1 8.4 2.1 8.4 3.6L8.4 8.3C9.5 7.7 10.7 8 10.9 8.9C11.9 8.3 13.1 8.7 13.3 9.7C14.3 9.3 15.5 9.9 15.6 11.1L15.7 14.5C15.7 17 14.6 19 13.5 19.9L8 19.9C6.5 18.5 4.5 15.5 2.7 12.6C1.9 11.1 3.2 9.8 4.4 10.8L6 12.3Z" fill="#fff" stroke="#000" stroke-width="0.9" stroke-linejoin="round"/><path d="M10.9 9.2v2.2M13.3 10v1.8" stroke="#888" stroke-width="0.5" fill="none"/></svg>
<nav>
<div class="b" style="left:16px;top:461px;width:1263px;height:1px;background:rgba(204,204,220,0.12);"></div>
<div class="b" style="left:16px;top:459px;width:108px;height:2px;background:linear-gradient(90deg,#ff8833,#f55f3e);border-radius:1px;"></div>
<a class="t" style="left:32.4px;top:432px;font-size:14.4px;line-height:20px;transform:scaleX(1.0375);-webkit-text-stroke:0.6px;">Breakdown</a>
<a class="t" style="left:139.6px;top:432px;font-size:14.4px;line-height:20px;color:#a1a2af;transform:scaleX(1.0735);-webkit-text-stroke:0.4px;">Service structure</a>
<a class="t" style="left:288.2px;top:432px;font-size:14.4px;line-height:20px;color:#a1a2af;transform:scaleX(1.0452);-webkit-text-stroke:0.4px;">Comparison</a>
<a class="t" style="left:402px;top:432px;font-size:14.4px;line-height:20px;color:#a1a2af;transform:scaleX(1.0471);-webkit-text-stroke:0.4px;">Traces</a>
<div class="b" style="left:455px;top:433px;width:40px;height:19px;background:#25272e;border-radius:10px;"></div>
<span class="t" style="left:463.6px;top:432.4px;font-size:12.4px;line-height:20px;color:#a8a9b6;transform:scaleX(1.1166);-webkit-text-stroke:0.6px;">200</span>
<button class="b" style="left:1243px;top:428px;width:34px;height:30px;background:rgba(204,204,220,0.1);border:1px solid rgba(204,204,220,0.1);border-radius:6px;"></button>
<svg class="i" style="left:1252px;top:435px;" width="18" height="18" viewBox="0 0 24 24" fill="none" stroke="#c8c9d8" stroke-width="1.87" stroke-linecap="round" stroke-linejoin="round"><circle cx="18" cy="5.5" r="2.8"/><circle cx="6" cy="12" r="2.8"/><circle cx="18" cy="18.5" r="2.8"/><path d="M8.5 10.7l7-3.9M8.5 13.3l7 3.9"/></svg>
</nav>
<p class="t" style="left:16.4px;top:478.6px;font-size:14.4px;line-height:20px;transform:scaleX(1.0668);-webkit-text-stroke:0.2px;">Attributes are ordered by their rate of requests per second.</p>
<div class="b" style="left:431px;top:487px;width:16px;height:4px;background:#008a00;border-radius:2px;"></div>
<span class="t" style="left:455.4px;top:478.6px;font-size:14.4px;line-height:20px;transform:scaleX(0.9702);-webkit-text-stroke:0.2px;">Rate</span>
<div class="b" style="left:500.6px;top:487px;width:16px;height:4px;background:#fa0000;border-radius:2px;"></div>
<span class="t" style="left:524.8px;top:478.6px;font-size:14.4px;line-height:20px;transform:scaleX(1.0286);-webkit-text-stroke:0.2px;">Error</span>
<label class="t" style="left:1033.6px;top:483px;font-size:12.4px;line-height:20px;transform:scaleX(1.0623);-webkit-text-stroke:0.65px;">View</label>
<div class="b" style="left:1070px;top:477px;width:207px;height:30px;background:#181b1f;border:1px solid rgba(204,204,220,0.2);border-radius:6px;"></div>
<span class="t" style="left:1089.4px;top:482.6px;font-size:14.4px;line-height:20px;color:#a3a4b1;transform:scaleX(1.0271);-webkit-text-stroke:0.4px;">Single</span>
<div class="b" style="left:1147px;top:480px;width:61px;height:25.5px;background:#2a2d34;border-radius:4px;"></div>
<span class="t" style="left:1162.8px;top:482.6px;font-size:14.4px;line-height:20px;color:#d5d6e4;transform:scaleX(1.0483);-webkit-text-stroke:0.65px;">Grid</span>
<span class="t" style="left:1223.6px;top:482.6px;font-size:14.4px;line-height:20px;color:#a3a4b1;transform:scaleX(1.0032);-webkit-text-stroke:0.4px;">Rows</span>
<aside>
<div class="b" style="left:16px;top:516px;width:298px;height:350px;background:#181b1f;border:1px solid rgba(204,204,220,0.12);border-radius:6px;"></div>
<h3 class="t" style="left:25.2px;top:525px;font-size:18.3px;line-height:24px;transform:scaleX(0.962);-webkit-text-stroke:0.2px;">Attributes</h3>
<div class="b" style="left:25px;top:550px;width:282px;height:1px;background:rgba(204,204,220,0.12);"></div>
<span class="t" style="left:25.2px;top:564.6px;font-size:12.4px;line-height:20px;transform:scaleX(1.0612);-webkit-text-stroke:0.65px;">Selected: resource.service.name</span>
<div class="b" style="left:25px;top:599px;width:280px;height:30px;background:#111217;border:1px solid rgba(204,204,220,0.2);border-radius:6px;"></div>
<svg class="i" style="left:31.9px;top:606.5px;" width="17" height="17" viewBox="0 0 24 24" fill="none" stroke="#a2a3b0" stroke-width="1.98" stroke-linecap="round" stroke-linejoin="round"><circle cx="11" cy="11" r="7.5"/><path d="M16.5 16.5L21 21"/></svg>
<span class="t" style="left:54.6px;top:605px;font-size:14.4px;line-height:20px;color:#9a9ba8;transform:scaleX(1.029);-webkit-text-stroke:0.2px;">Search attributes...</span>
<a class="t" style="left:41.4px;top:645.6px;font-size:12.4px;line-height:20px;transform:scaleX(1.0261);-webkit-text-stroke:0.6px;">Favorites</a>
<a class="t" style="left:126px;top:645.6px;font-size:12.4px;line-height:20px;color:#a1a2af;transform:scaleX(1.0376);-webkit-text-stroke:0.4px;">All</a>
<a class="t" style="left:172.6px;top:645.6px;font-size:12.4px;line-height:20px;color:#a1a2af;transform:scaleX(1.0277);-webkit-text-stroke:0.4px;">Resource</a>
<a class="t" style="left:258.8px;top:645.6px;font-size:12.4px;line-height:20px;color:#a1a2af;transform:scaleX(1.012);-webkit-text-stroke:0.4px;">Span</a>
<div class="b" style="left:25px;top:674px;width:282px;height:1px;background:rgba(204,204,220,0.12);"></div>
<div class="b" style="left:25px;top:672px;width:85px;height:2px;background:linear-gradient(90deg,#ff8833,#f55f3e);border-radius:1px;"></div>
<ul>
<div class="b" style="left:21px;top:683px;width:273px;height:30px;background:#1c2539;border:1px solid #6497ec;border-radius:6px;"></div>
<li>
<div class="b" style="left:26.2px;top:687.5px;width:62.599999999999994px;height:20px;background:#2b2d33;border:1px solid rgba(204,204,220,0.22);border-radius:4px;"></div>
<span class="t" style="left:31px;top:688.6px;font-size:12.4px;line-height:20px;transform:scaleX(1.0628);-webkit-text-stroke:0.2px;">resource.</span>
<span class="t" style="left:99.2px;top:687.8px;font-size:12.4px;line-height:20px;transform:scaleX(1.0816);-webkit-text-stroke:0.65px;">service.name</span>
<svg class="i" style="left:272px;top:691.9px;" width="15" height="15" viewBox="0 0 24 24" fill="none" stroke="#cfcfe0" stroke-width="2.4" stroke-linecap="round" stroke-linejoin="round"><path d="M12 3.6l2.6 5.4 5.9.8-4.3 4.1 1.05 5.85L12 16.95 6.75 19.75l1.05-5.85L3.5 9.8l5.9-.8z" fill="#cfcfe0" stroke="#cfcfe0" stroke-width="1.8" stroke-linejoin="round"/></svg>
</li>
<li>
<div class="b" style="left:26.2px;top:723.5px;width:39.599999999999994px;height:20px;background:#2b2d33;border:1px solid rgba(204,204,220,0.22);border-radius:4px;"></div>
<span class="t" style="left:31px;top:724.6px;font-size:12.4px;line-height:20px;transform:scaleX(1.0524);-webkit-text-stroke:0.2px;">span.</span>
<span class="t" style="left:75.6px;top:723.8px;font-size:12.4px;line-height:20px;transform:scaleX(1.0548);-webkit-text-stroke:0.65px;">name</span>
<svg class="i" style="left:272px;top:727.9px;" width="15" height="15" viewBox="0 0 24 24" fill="none" stroke="#cfcfe0" stroke-width="2.4" stroke-linecap="round" stroke-linejoin="round"><path d="M12 3.6l2.6 5.4 5.9.8-4.3 4.1 1.05 5.85L12 16.95 6.75 19.75l1.05-5.85L3.5 9.8l5.9-.8z" fill="#cfcfe0" stroke="#cfcfe0" stroke-width="1.8" stroke-linejoin="round"/></svg>
</li>
<li>
<div class="b" style="left:26.2px;top:759.5px;width:39.599999999999994px;height:20px;background:#2b2d33;border:1px solid rgba(204,204,220,0.22);border-radius:4px;"></div>
<span class="t" style="left:31px;top:760.6px;font-size:12.4px;line-height:20px;transform:scaleX(1.0524);-webkit-text-stroke:0.2px;">span.</span>
<span class="t" style="left:75.6px;top:759.8px;font-size:12.4px;line-height:20px;transform:scaleX(1.1304);-webkit-text-stroke:0.65px;">kind</span>
<svg class="i" style="left:272px;top:763.9px;" width="15" height="15" viewBox="0 0 24 24" fill="none" stroke="#cfcfe0" stroke-width="2.4" stroke-linecap="round" stroke-linejoin="round"><path d="M12 3.6l2.6 5.4 5.9.8-4.3 4.1 1.05 5.85L12 16.95 6.75 19.75l1.05-5.85L3.5 9.8l5.9-.8z" fill="#cfcfe0" stroke="#cfcfe0" stroke-width="1.8" stroke-linejoin="round"/></svg>
</li>
<li>
<div class="b" style="left:26.2px;top:795.5px;width:39.599999999999994px;height:20px;background:#2b2d33;border:1px solid rgba(204,204,220,0.22);border-radius:4px;"></div>
<span class="t" style="left:31px;top:796.6px;font-size:12.4px;line-height:20px;transform:scaleX(1.0524);-webkit-text-stroke:0.2px;">span.</span>
<span class="t" style="left:75.6px;top:795.8px;font-size:12.4px;line-height:20px;transform:scaleX(1.0716);-webkit-text-stroke:0.65px;">rootName</span>
<svg class="i" style="left:272px;top:799.9px;" width="15" height="15" viewBox="0 0 24 24" fill="none" stroke="#cfcfe0" stroke-width="2.4" stroke-linecap="round" stroke-linejoin="round"><path d="M12 3.6l2.6 5.4 5.9.8-4.3 4.1 1.05 5.85L12 16.95 6.75 19.75l1.05-5.85L3.5 9.8l5.9-.8z" fill="#cfcfe0" stroke="#cfcfe0" stroke-width="1.8" stroke-linejoin="round"/></svg>
</li>
<li>
<div class="b" style="left:26.2px;top:831.5px;width:39.599999999999994px;height:20px;background:#2b2d33;border:1px solid rgba(204,204,220,0.22);border-radius:4px;"></div>
<span class="t" style="left:31px;top:832.6px;font-size:12.4px;line-height:20px;transform:scaleX(1.0524);-webkit-text-stroke:0.2px;">span.</span>
<span class="t" style="left:75.6px;top:831.8px;font-size:12.4px;line-height:20px;transform:scaleX(1.0769);-webkit-text-stroke:0.65px;">rootServiceName</span>
<svg class="i" style="left:272px;top:835.9px;" width="15" height="15" viewBox="0 0 24 24" fill="none" stroke="#cfcfe0" stroke-width="2.4" stroke-linecap="round" stroke-linejoin="round"><path d="M12 3.6l2.6 5.4 5.9.8-4.3 4.1 1.05 5.85L12 16.95 6.75 19.75l1.05-5.85L3.5 9.8l5.9-.8z" fill="#cfcfe0" stroke="#cfcfe0" stroke-width="1.8" stroke-linejoin="round"/></svg>
</li>
</ul>
<div class="b" style="left:300px;top:682px;width:14.5px;height:184.5px;background:#2c2d31;"></div>
<div class="b" style="left:304px;top:685.5px;width:8.2px;height:113.5px;background:#696a6c;border-radius:4px;"></div>
</aside>
<section>
<div class="b" style="left:332px;top:516px;width:945px;height:30px;background:#111217;border:1px solid rgba(204,204,220,0.2);border-radius:6px;"></div>
<svg class="i" style="left:339.5px;top:523.5px;" width="17" height="17" viewBox="0 0 24 24" fill="none" stroke="#a2a3b0" stroke-width="1.98" stroke-linecap="round" stroke-linejoin="round"><circle cx="11" cy="11" r="7.5"/><path d="M16.5 16.5L21 21"/></svg>
<span class="t" style="left:361.6px;top:521.8px;font-size:14.4px;line-height:20px;color:#9a9ba8;transform:scaleX(1.0108);-webkit-text-stroke:0.2px;">Search</span>
<div class="b" style="left:332px;top:556px;width:945px;height:198px;background:#181b1f;border:1px solid rgba(204,204,220,0.12);border-radius:6px;"></div>
<h2 class="t" style="left:341.2px;top:563.4px;font-size:14.4px;line-height:20px;transform:scaleX(1.1115);-webkit-text-stroke:0.6px;">frontend</h2>
<svg class="i" style="left:1139.6px;top:566px;" width="14" height="14" viewBox="0 0 24 24" fill="none" stroke="#6e9fff" stroke-width="2.4" stroke-linecap="round" stroke-linejoin="round"><circle cx="11" cy="11" r="7.5"/><path d="M16.5 16.5L21 21M7.8 11h6.4M11 7.8v6.4"/></svg>
<a class="t" style="left:1162.8px;top:562.8px;font-size:12.4px;line-height:20px;color:#6e9fff;transform:scaleX(1.0933);-webkit-text-stroke:0.65px;">Add to filters</a>
<svg class="i" style="left:333px;top:557px" width="945" height="198" viewBox="333 557 945 198" role="img">
<path d="M400.3 726.5H1262M400.3 708.5H1262M400.3 691.5H1262M400.3 673.5H1262M400.3 655.5H1262M400.3 638.5H1262M400.3 620.5H1262M445.5 605.2V729.6M517.5 605.2V729.6M589.5 605.2V729.6M661.5 605.2V729.6M733.5 605.2V729.6M805.5 605.2V729.6M877.5 605.2V729.6M949.5 605.2V729.6M1021.5 605.2V729.6M1093.5 605.2V729.6M1165.5 605.2V729.6M1237.5 605.2V729.6" stroke="rgba(240,250,255,0.09)" stroke-width="1" fill="none"/>
<path d="M674 726v-3h8v3zM688 726v-7h8v7zM701 726v-11h8v11zM715 726v-15h8v15zM728 726v-19h8v19zM742 726v-23h8v23zM755 726v-27h8v27zM768 726v-31h8v31zM782 726v-35h8v35zM795 726v-39h8v39zM809 726v-44h8v44zM822 726v-63h8v63zM836 726v-84h8v84zM849 726v-96h8v96zM862 726v-103h8v103zM876 726v-111h8v111zM889 726v-110h8v110zM903 726v-119h8v119zM916 726v-121h8v121zM930 726v-121h8v121zM943 726v-109h8v109zM956 726v-109h8v109zM970 726v-110h8v110zM983 726v-111h8v111zM997 726v-108h8v108zM1010 726v-115h8v115zM1023 726v-119h8v119zM1037 726v-116h8v116zM1050 726v-117h8v117zM1064 726v-116h8v116zM1077 726v-115h8v115zM1091 726v-120h8v120zM1104 726v-112h8v112zM1117 726v-112h8v112zM1131 726v-111h8v111zM1144 726v-115h8v115zM1158 726v-108h8v108zM1171 726v-100h8v100zM1185 726v-104h8v104zM1198 726v-108h8v108zM1211 726v-101h8v101zM1225 726v-101h8v101zM1238 726v-100h8v100zM1252 726v-100h8v100z" fill="#73bf69" fill-opacity="0.75"/>
<path d="M683.1 719.1l3.6 3.6l-3.6 3.6l-3.6 -3.6zM707.5 711l3.6 3.6l-3.6 3.6l-3.6 -3.6zM719.4 706.8l3.6 3.6l-3.6 3.6l-3.6 -3.6zM727.1 707.3l3.6 3.6l-3.6 3.6l-3.6 -3.6zM749.4 699.2l3.6 3.6l-3.6 3.6l-3.6 -3.6zM755.9 698.9l3.6 3.6l-3.6 3.6l-3.6 -3.6zM763.5 694.6l3.6 3.6l-3.6 3.6l-3.6 -3.6zM770 694.9l3.6 3.6l-3.6 3.6l-3.6 -3.6zM787.7 688.2l3.6 3.6l-3.6 3.6l-3.6 -3.6zM798.5 687.9l3.6 3.6l-3.6 3.6l-3.6 -3.6zM815.7 663.4l3.6 3.6l-3.6 3.6l-3.6 -3.6zM825.3 663l3.6 3.6l-3.6 3.6l-3.6 -3.6zM832 643.1l3.6 3.6l-3.6 3.6l-3.6 -3.6zM840.2 630.8l3.6 3.6l-3.6 3.6l-3.6 -3.6zM860.8 623.9l3.6 3.6l-3.6 3.6l-3.6 -3.6zM872.6 614.9l3.6 3.6l-3.6 3.6l-3.6 -3.6zM883.4 615.8l3.6 3.6l-3.6 3.6l-3.6 -3.6zM896.9 608l3.6 3.6l-3.6 3.6l-3.6 -3.6zM907.5 605.1l3.6 3.6l-3.6 3.6l-3.6 -3.6zM920.3 605.1l3.6 3.6l-3.6 3.6l-3.6 -3.6zM927.1 605.2l3.6 3.6l-3.6 3.6l-3.6 -3.6zM942 617.8l3.6 3.6l-3.6 3.6l-3.6 -3.6zM947.1 617.4l3.6 3.6l-3.6 3.6l-3.6 -3.6zM961.6 616l3.6 3.6l-3.6 3.6l-3.6 -3.6zM966.2 615.8l3.6 3.6l-3.6 3.6l-3.6 -3.6zM972.4 615.6l3.6 3.6l-3.6 3.6l-3.6 -3.6zM988.7 618.6l3.6 3.6l-3.6 3.6l-3.6 -3.6zM995.8 618.9l3.6 3.6l-3.6 3.6l-3.6 -3.6zM1002.2 618.1l3.6 3.6l-3.6 3.6l-3.6 -3.6zM1011.4 611.4l3.6 3.6l-3.6 3.6l-3.6 -3.6zM1015.7 611l3.6 3.6l-3.6 3.6l-3.6 -3.6zM1025.2 606.8l3.6 3.6l-3.6 3.6l-3.6 -3.6zM1043.3 609.1l3.6 3.6l-3.6 3.6l-3.6 -3.6zM1054 609.7l3.6 3.6l-3.6 3.6l-3.6 -3.6zM1062.1 610.5l3.6 3.6l-3.6 3.6l-3.6 -3.6zM1072.5 612.2l3.6 3.6l-3.6 3.6l-3.6 -3.6zM1078.6 612.7l3.6 3.6l-3.6 3.6l-3.6 -3.6zM1102.6 614.4l3.6 3.6l-3.6 3.6l-3.6 -3.6zM1108.5 614.7l3.6 3.6l-3.6 3.6l-3.6 -3.6zM1124 615.8l3.6 3.6l-3.6 3.6l-3.6 -3.6zM1129.4 616l3.6 3.6l-3.6 3.6l-3.6 -3.6zM1150.6 617.8l3.6 3.6l-3.6 3.6l-3.6 -3.6zM1156.7 617.8l3.6 3.6l-3.6 3.6l-3.6 -3.6zM1163.6 626.1l3.6 3.6l-3.6 3.6l-3.6 -3.6zM1170.2 626.1l3.6 3.6l-3.6 3.6l-3.6 -3.6zM1182.4 622l3.6 3.6l-3.6 3.6l-3.6 -3.6zM1195.7 618.6l3.6 3.6l-3.6 3.6l-3.6 -3.6zM1209.2 625.4l3.6 3.6l-3.6 3.6l-3.6 -3.6zM1217.1 625.4l3.6 3.6l-3.6 3.6l-3.6 -3.6zM1226.1 625.4l3.6 3.6l-3.6 3.6l-3.6 -3.6zM1243.9 626.1l3.6 3.6l-3.6 3.6l-3.6 -3.6zM1250.9 626.1l3.6 3.6l-3.6 3.6l-3.6 -3.6zM1261.3 623.9l3.6 3.6l-3.6 3.6l-3.6 -3.6z" fill="#73bf69" fill-opacity="0.5"/>
<text x="386.3" y="730.2" font-size="12.3" fill="#ccccdc" stroke="#ccccdc" stroke-width="0.3" textLength="7.8" lengthAdjust="spacingAndGlyphs">0</text>
<text x="379.5" y="712.2" font-size="12.3" fill="#ccccdc" stroke="#ccccdc" stroke-width="0.3" textLength="14.6" lengthAdjust="spacingAndGlyphs">25</text>
<text x="379" y="695.2" font-size="12.3" fill="#ccccdc" stroke="#ccccdc" stroke-width="0.3" textLength="15.1" lengthAdjust="spacingAndGlyphs">50</text>
<text x="379.9" y="677.2" font-size="12.3" fill="#ccccdc" stroke="#ccccdc" stroke-width="0.3" textLength="14.2" lengthAdjust="spacingAndGlyphs">75</text>
<text x="373.1" y="659.2" font-size="12.3" fill="#ccccdc" stroke="#ccccdc" stroke-width="0.3" textLength="21" lengthAdjust="spacingAndGlyphs">100</text>
<text x="374.1" y="642.2" font-size="12.3" fill="#ccccdc" stroke="#ccccdc" stroke-width="0.3" textLength="20" lengthAdjust="spacingAndGlyphs">125</text>
<text x="373.6" y="624.2" font-size="12.3" fill="#ccccdc" stroke="#ccccdc" stroke-width="0.3" textLength="20.5" lengthAdjust="spacingAndGlyphs">150</text>
<text x="429" y="745" font-size="12.3" fill="#ccccdc" stroke="#ccccdc" stroke-width="0.3" textLength="31.4" lengthAdjust="spacingAndGlyphs">14:45</text>
<text x="501" y="745" font-size="12.3" fill="#ccccdc" stroke="#ccccdc" stroke-width="0.3" textLength="31.4" lengthAdjust="spacingAndGlyphs">14:50</text>
<text x="573.3" y="745" font-size="12.3" fill="#ccccdc" stroke="#ccccdc" stroke-width="0.3" textLength="31" lengthAdjust="spacingAndGlyphs">14:55</text>
<text x="645.1" y="745" font-size="12.3" fill="#ccccdc" stroke="#ccccdc" stroke-width="0.3" textLength="31.4" lengthAdjust="spacingAndGlyphs">15:00</text>
<text x="717.3" y="745" font-size="12.3" fill="#ccccdc" stroke="#ccccdc" stroke-width="0.3" textLength="31" lengthAdjust="spacingAndGlyphs">15:05</text>
<text x="790.3" y="745" font-size="12.3" fill="#ccccdc" stroke="#ccccdc" stroke-width="0.3" textLength="29" lengthAdjust="spacingAndGlyphs">15:10</text>
<text x="862.6" y="745" font-size="12.3" fill="#ccccdc" stroke="#ccccdc" stroke-width="0.3" textLength="28.6" lengthAdjust="spacingAndGlyphs">15:15</text>
<text x="933.4" y="745" font-size="12.3" fill="#ccccdc" stroke="#ccccdc" stroke-width="0.3" textLength="31" lengthAdjust="spacingAndGlyphs">15:20</text>
<text x="1005.7" y="745" font-size="12.3" fill="#ccccdc" stroke="#ccccdc" stroke-width="0.3" textLength="30.5" lengthAdjust="spacingAndGlyphs">15:25</text>
<text x="1077.4" y="745" font-size="12.3" fill="#ccccdc" stroke="#ccccdc" stroke-width="0.3" textLength="31.1" lengthAdjust="spacingAndGlyphs">15:30</text>
<text x="1149.6" y="745" font-size="12.3" fill="#ccccdc" stroke="#ccccdc" stroke-width="0.3" textLength="30.6" lengthAdjust="spacingAndGlyphs">15:35</text>
<text x="1221.2" y="745" font-size="12.3" fill="#ccccdc" stroke="#ccccdc" stroke-width="0.3" textLength="31.4" lengthAdjust="spacingAndGlyphs">15:40</text>
</svg>
<svg class="i" style="left:333px;top:600px" width="40" height="130" viewBox="333 600 40 130"><text x="338.2" y="665.8" font-size="12.3" fill="#ccccdc" stroke="#ccccdc" stroke-width="0.3" textLength="25.5" lengthAdjust="spacingAndGlyphs" transform="rotate(-90 351 665.8)">Rate</text></svg>
</section>
</main>
</div>
</body>
</html>
